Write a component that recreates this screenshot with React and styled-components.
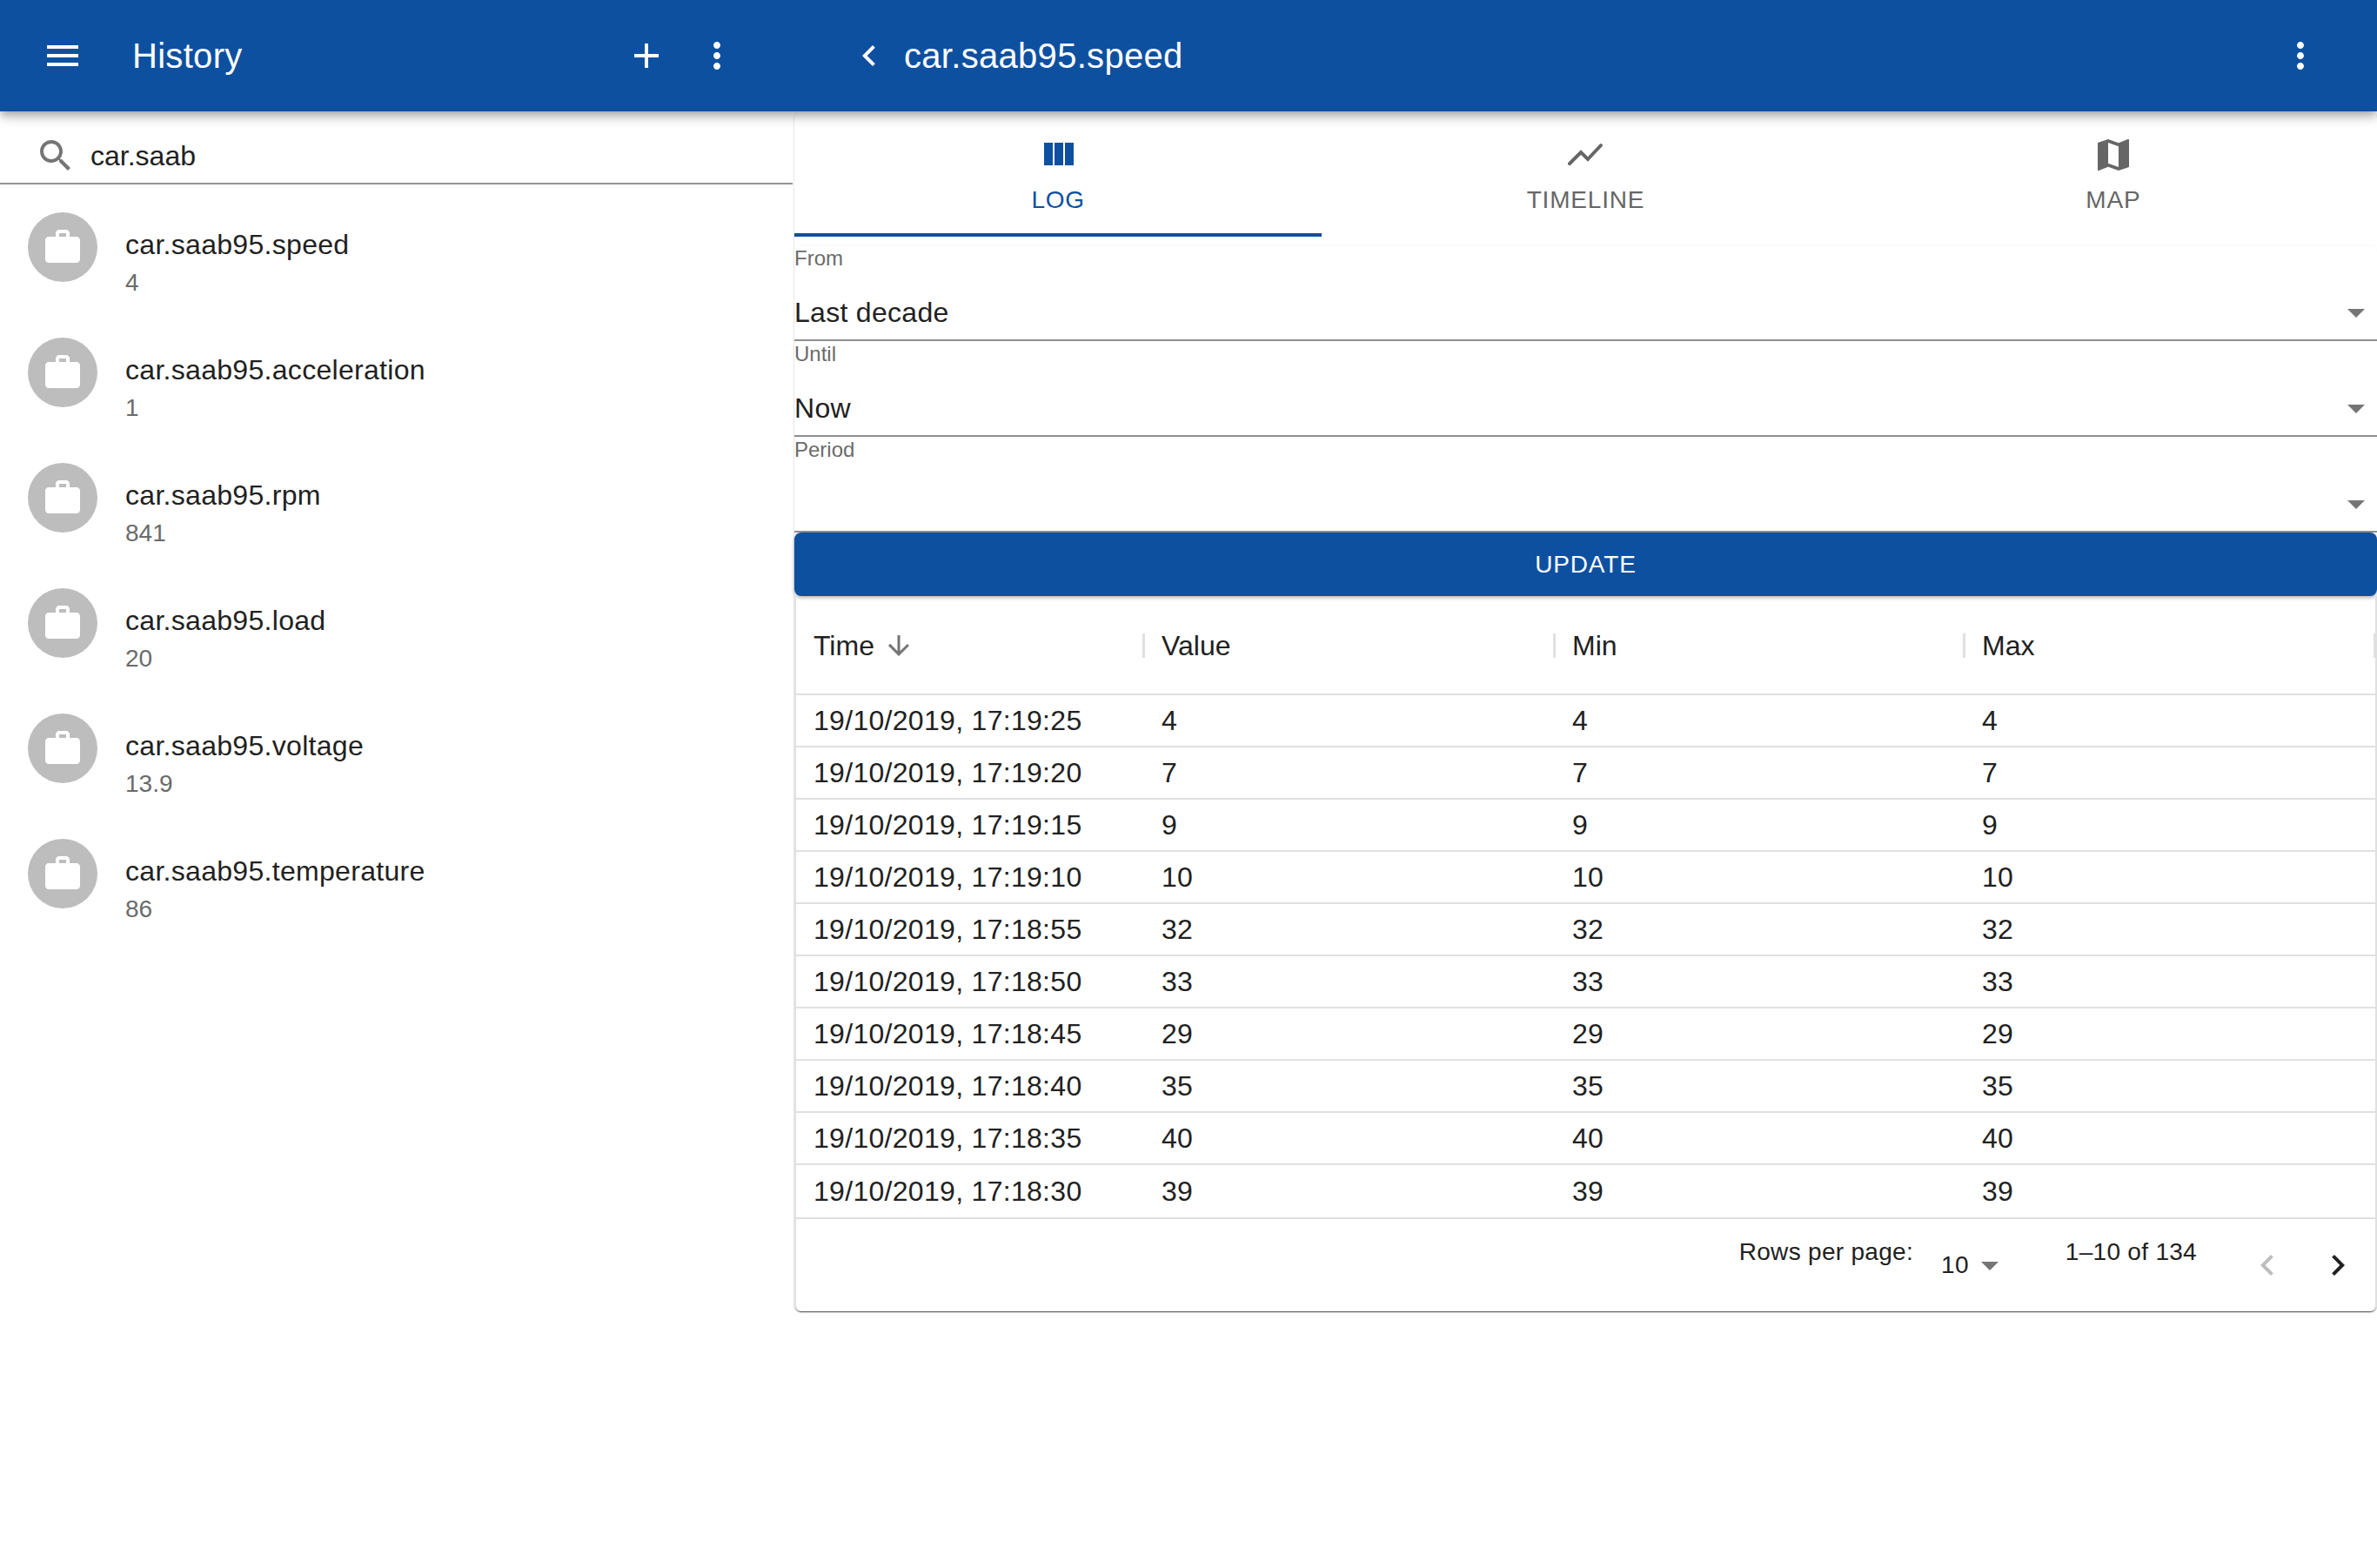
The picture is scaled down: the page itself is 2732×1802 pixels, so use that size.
import React from "react";
import styled, { createGlobalStyle } from "styled-components";

const BLUE = "#0e50a0";

const GlobalStyle = createGlobalStyle`
  html, body {
    margin: 0;
    padding: 0;
    background: #fff;
    color: #212121;
    font-family: "Liberation Sans", Arial, sans-serif;
  }
  * {
    box-sizing: border-box;
  }
`;

const Page = styled.div`
  width: 2732px;
  height: 1802px;
  overflow: hidden;
  display: flex;
  flex-direction: column;
`;

const AppBar = styled.header`
  position: relative;
  z-index: 2;
  flex: none;
  height: 128px;
  display: grid;
  grid-template-columns: 912px 1fr;
  background: ${BLUE};
  color: #fff;
  box-shadow: 0 4px 8px -2px rgba(0, 0, 0, 0.2), 0 8px 10px 0 rgba(0, 0, 0, 0.14),
    0 2px 20px 0 rgba(0, 0, 0, 0.12);
`;

const Toolbar = styled.div`
  display: flex;
  align-items: center;
  padding-left: ${(p) => p.$left}px;
  padding-right: 48px;
`;

const Title = styled.h1`
  flex: 1;
  margin: 0 0 0 ${(p) => p.$gap}px;
  font-size: 40px;
  font-weight: 400;
  line-height: 48px;
  letter-spacing: 0.3px;
`;

const IconButton = styled.span`
  flex: none;
  width: ${(p) => p.$width || 81}px;
  height: 48px;
  display: flex;
  align-items: center;
  justify-content: center;
  color: ${(p) => p.$color || "inherit"};
`;

const Icon = styled.svg`
  flex: none;
  display: block;
  width: ${(p) => p.$size || 48}px;
  height: ${(p) => p.$size || 48}px;
  fill: currentColor;
`;

const Body = styled.main`
  flex: 1;
  display: grid;
  grid-template-columns: 913px 1fr;
  align-items: start;
`;

const Sidebar = styled.aside`
  display: flex;
  flex-direction: column;
`;

const SearchBar = styled.div`
  height: 84px;
  display: flex;
  align-items: center;
  padding: 20px 0 0 40px;
  margin-right: 2px;
  border-bottom: 2px solid #949494;
  color: #757575;
`;

const SearchText = styled.span`
  margin-left: 16px;
  font-size: 32px;
  line-height: 40px;
  color: #212121;
`;

const SensorList = styled.ul`
  list-style: none;
  margin: 0;
  padding: 0;
`;

const SensorItem = styled.li`
  height: 144px;
  display: flex;
  align-items: center;
  padding-left: 32px;
`;

const Avatar = styled.span`
  flex: none;
  width: 80px;
  height: 80px;
  border-radius: 50%;
  background: #bdbdbd;
  color: #fff;
  display: flex;
  align-items: center;
  justify-content: center;
`;

const SensorText = styled.div`
  margin-left: 32px;
  padding-top: 38px;
`;

const SensorName = styled.div`
  font-size: 32px;
  line-height: 44px;
  letter-spacing: 0.3px;
`;

const SensorValue = styled.div`
  font-size: 28px;
  line-height: 44px;
  color: #6b6b6b;
`;

const Detail = styled.section`
  height: 1379px;
  display: flex;
  flex-direction: column;
  border-radius: 8px;
  box-shadow: 0 2px 1px -1px rgba(0, 0, 0, 0.55), 0 1px 2px 0 rgba(0, 0, 0, 0.32);
`;

const Tabs = styled.nav`
  flex: none;
  height: 144px;
  display: grid;
  grid-template-columns: repeat(3, 1fr);
`;

const Tab = styled.div`
  display: flex;
  flex-direction: column;
  align-items: center;
  padding-top: 26px;
  color: ${(p) => (p.$active ? BLUE : "#666")};
  border-bottom: 4px solid ${(p) => (p.$active ? BLUE : "transparent")};
`;

const TabLabel = styled.span`
  margin-top: 12px;
  font-size: 28px;
  line-height: 32px;
  letter-spacing: 0.8px;
`;

const Form = styled.form`
  flex: none;
  margin-top: 10px;
  border-radius: 8px 8px 0 0;
  box-shadow: 0 -1px 2px rgba(0, 0, 0, 0.025);
`;

const Field = styled.div`
  height: 110px;
  display: flex;
  flex-direction: column;
  justify-content: space-between;
  border-bottom: 2px solid #8f8f8f;
`;

const FieldLabel = styled.label`
  font-size: 24px;
  line-height: 30px;
  color: #6b6b6b;
`;

const FieldValue = styled.div`
  height: 62px;
  display: flex;
  align-items: center;
  justify-content: space-between;
  font-size: 32px;
  letter-spacing: 0.3px;
  color: #212121;
`;

const Caret = styled.span`
  color: #757575;
`;

const UpdateButton = styled.button`
  flex: none;
  height: 73px;
  border: 0;
  padding: 0;
  border-radius: 8px;
  background: ${BLUE};
  color: #fff;
  font-family: inherit;
  font-size: 28px;
  letter-spacing: 0.8px;
  box-shadow: 0 2px 4px rgba(0, 0, 0, 0.3);
`;

const TablePaper = styled.div`
  flex: 1;
  display: flex;
  flex-direction: column;
  border-left: 2px solid #e0e0e0;
  border-right: 2px solid #e0e0e0;
  border-radius: 0 0 8px 8px;
`;

const Row = styled.div`
  flex: none;
  height: ${(p) => p.$height}px;
  display: grid;
  grid-template-columns: 400px 472px 471px 1fr;
  align-items: center;
  border-bottom: 2px solid #e0e0e0;
  font-size: 32px;
  letter-spacing: 0.3px;
`;

const Cell = styled.div`
  padding-left: 20px;
`;

const HeadCell = styled.div`
  display: flex;
  align-items: center;
  justify-content: space-between;
  padding-left: 20px;
  margin-top: 2px;
  letter-spacing: 0;
`;

const HeadLabel = styled.span`
  display: flex;
  align-items: center;
  gap: 10px;
`;

const SortIcon = styled.span`
  color: #757575;
  display: flex;
`;

const ColumnDivider = styled.span`
  width: 3px;
  height: 28px;
  margin-right: -1px;
  background: #e0e0e0;
`;

const Pagination = styled.div`
  flex: 1;
  display: flex;
  justify-content: flex-end;
  align-items: flex-start;
  padding-right: 3px;
  font-size: 28px;
  letter-spacing: 0.3px;
`;

const Caption = styled.span`
  margin: 22px 0 0 ${(p) => p.$left || 0}px;
  line-height: 32px;
`;

const PageSize = styled.div`
  margin: 29px 0 0 32px;
  height: 48px;
  display: flex;
  align-items: center;
`;

const PageButtons = styled.div`
  margin: 29px 0 0 40px;
  display: flex;
`;

const paths = {
  menu: "M3 18h18v-2H3v2zm0-5h18v-2H3v2zm0-7v2h18V6H3z",
  add: "M19 13h-6v6h-2v-6H5v-2h6V5h2v6h6v2z",
  more: "M12 8c1.1 0 2-.9 2-2s-.9-2-2-2-2 .9-2 2 .9 2 2 2zm0 2c-1.1 0-2 .9-2 2s.9 2 2 2 2-.9 2-2-.9-2-2-2zm0 6c-1.1 0-2 .9-2 2s.9 2 2 2 2-.9 2-2-.9-2-2-2z",
  search:
    "M15.5 14h-.79l-.28-.27C15.41 12.59 16 11.11 16 9.5 16 5.91 13.09 3 9.5 3S3 5.91 3 9.5 5.91 16 9.5 16c1.61 0 3.09-.59 4.23-1.57l.27.28v.79l5 4.99L20.49 19l-4.99-5zm-6 0C7.01 14 5 11.99 5 9.5S7.01 5 9.5 5 14 7.01 14 9.5 11.99 14 9.5 14z",
  work: "M20 6h-4V4c0-1.11-.89-2-2-2h-4c-1.11 0-2 .89-2 2v2H4c-1.11 0-1.99.89-1.99 2L2 19c0 1.11.89 2 2 2h16c1.11 0 2-.89 2-2V8c0-1.11-.89-2-2-2zm-6 0h-4V4h4v2z",
  week: "M10 18h5V5h-5v13zm-6 0h5V5H4v13zM16 5v13h5V5h-5z",
  map: "M20.5 3l-.16.03L15 5.1 9 3 3.36 4.9c-.21.07-.36.25-.36.48V20.5c0 .28.22.5.5.5l.16-.03L9 18.9l6 2.1 5.64-1.9c.21-.07.36-.25.36-.48V3.5c0-.28-.22-.5-.5-.5zM15 19l-6-2.11V5l6 2.11V19z",
  left: "M15.41 16.59L10.83 12l4.58-4.59L14 6l-6 6 6 6 1.41-1.41z",
  right: "M8.59 16.59L13.17 12 8.59 7.41 10 6l6 6-6 6-1.41-1.41z",
  caret: "M7 10l5 5 5-5z",
  down: "M20 12l-1.41-1.41L13 16.17V4h-2v12.17l-5.58-5.59L4 12l8 8 8-8z",
};

function Glyph({ name, size }) {
  return (
    <Icon viewBox="0 0 24 24" $size={size}>
      <path d={paths[name]} />
    </Icon>
  );
}

function LineGlyph() {
  return (
    <Icon viewBox="0 0 24 24">
      <path
        d="M3 17l6.5-6.5 4 4L21 6.5"
        fill="none"
        stroke="currentColor"
        strokeWidth="2"
        strokeLinecap="round"
        strokeLinejoin="miter"
      />
    </Icon>
  );
}

const sensors = [
  ["car.saab95.speed", "4"],
  ["car.saab95.acceleration", "1"],
  ["car.saab95.rpm", "841"],
  ["car.saab95.load", "20"],
  ["car.saab95.voltage", "13.9"],
  ["car.saab95.temperature", "86"],
];

const fields = [
  ["From", "Last decade"],
  ["Until", "Now"],
  ["Period", ""],
];

const rows = [
  ["19/10/2019, 17:19:25", 4],
  ["19/10/2019, 17:19:20", 7],
  ["19/10/2019, 17:19:15", 9],
  ["19/10/2019, 17:19:10", 10],
  ["19/10/2019, 17:18:55", 32],
  ["19/10/2019, 17:18:50", 33],
  ["19/10/2019, 17:18:45", 29],
  ["19/10/2019, 17:18:40", 35],
  ["19/10/2019, 17:18:35", 40],
  ["19/10/2019, 17:18:30", 39],
];

export default function App() {
  return (
    <Page>
      <GlobalStyle />
      <AppBar>
        <Toolbar $left={48}>
          <Glyph name="menu" />
          <Title $gap={56}>History</Title>
          <IconButton>
            <Glyph name="add" />
          </IconButton>
          <IconButton>
            <Glyph name="more" />
          </IconButton>
        </Toolbar>
        <Toolbar $left={63}>
          <Glyph name="left" />
          <Title $gap={16}>car.saab95.speed</Title>
          <IconButton>
            <Glyph name="more" />
          </IconButton>
        </Toolbar>
      </AppBar>
      <Body>
        <Sidebar>
          <SearchBar>
            <Glyph name="search" />
            <SearchText>car.saab</SearchText>
          </SearchBar>
          <SensorList>
            {sensors.map(([name, value]) => (
              <SensorItem key={name}>
                <Avatar>
                  <Glyph name="work" />
                </Avatar>
                <SensorText>
                  <SensorName>{name}</SensorName>
                  <SensorValue>{value}</SensorValue>
                </SensorText>
              </SensorItem>
            ))}
          </SensorList>
        </Sidebar>
        <Detail>
          <Tabs>
            <Tab $active>
              <Glyph name="week" />
              <TabLabel>LOG</TabLabel>
            </Tab>
            <Tab>
              <LineGlyph />
              <TabLabel>TIMELINE</TabLabel>
            </Tab>
            <Tab>
              <Glyph name="map" />
              <TabLabel>MAP</TabLabel>
            </Tab>
          </Tabs>
          <Form>
            {fields.map(([label, value]) => (
              <Field key={label}>
                <FieldLabel>{label}</FieldLabel>
                <FieldValue>
                  <span>{value}</span>
                  <Caret>
                    <Glyph name="caret" />
                  </Caret>
                </FieldValue>
              </Field>
            ))}
          </Form>
          <UpdateButton type="button">UPDATE</UpdateButton>
          <TablePaper>
            <Row $height={114}>
              <HeadCell>
                <HeadLabel>
                  Time
                  <SortIcon>
                    <Glyph name="down" size={36} />
                  </SortIcon>
                </HeadLabel>
                <ColumnDivider />
              </HeadCell>
              <HeadCell>
                Value
                <ColumnDivider />
              </HeadCell>
              <HeadCell>
                Min
                <ColumnDivider />
              </HeadCell>
              <HeadCell>
                Max
                <ColumnDivider />
              </HeadCell>
            </Row>
            {rows.map(([time, value], i) => (
              <Row key={time} $height={i === rows.length - 1 ? 62 : 60}>
                <Cell>{time}</Cell>
                <Cell>{value}</Cell>
                <Cell>{value}</Cell>
                <Cell>{value}</Cell>
              </Row>
            ))}
            <Pagination>
              <Caption>Rows per page:</Caption>
              <PageSize>
                <span>10</span>
                <Caret>
                  <Glyph name="caret" />
                </Caret>
              </PageSize>
              <Caption $left={63}>1–10 of 134</Caption>
              <PageButtons>
                <IconButton $color="#bdbdbd">
                  <Glyph name="left" />
                </IconButton>
                <IconButton $color="#212121">
                  <Glyph name="right" />
                </IconButton>
              </PageButtons>
            </Pagination>
          </TablePaper>
        </Detail>
      </Body>
    </Page>
  );
}
